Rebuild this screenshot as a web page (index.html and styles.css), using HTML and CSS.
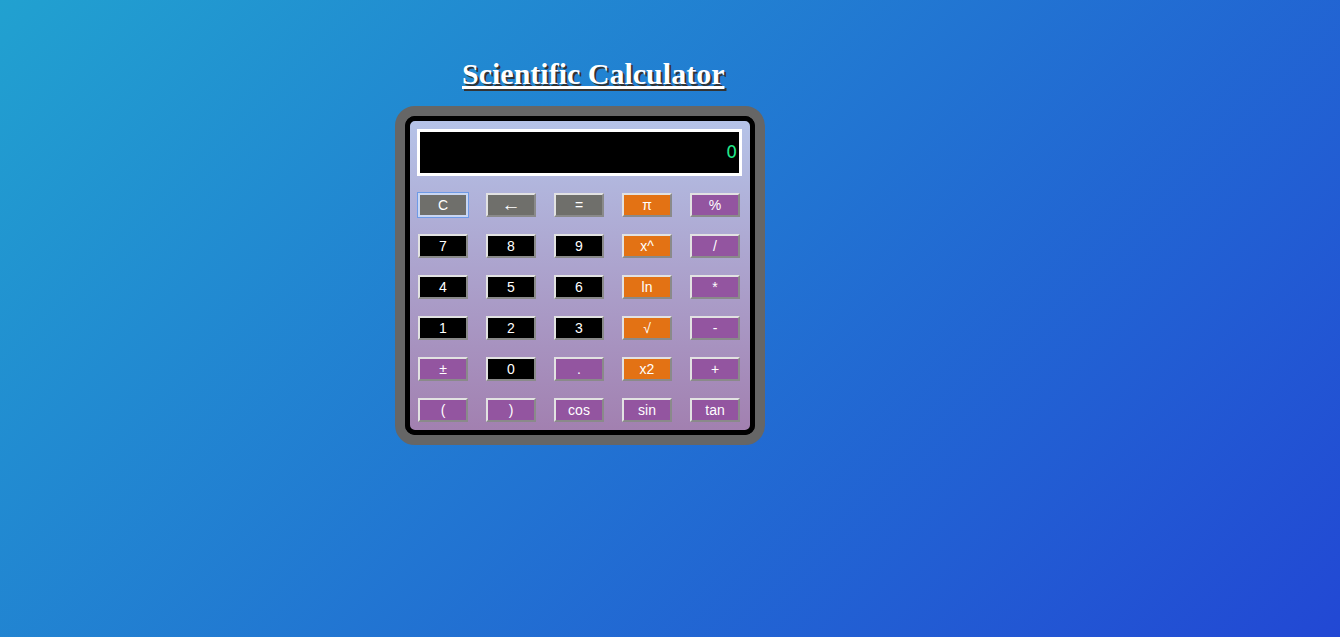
FILE: index.html
```html
<!DOCTYPE html>
<html>
<head>
<meta charset="utf-8">
<link rel="stylesheet" href="styles.css">
</head>
<body>
<div class="page">
  <h1 class="title">Scientific Calculator</h1>
  <div class="calc">
    <div class="panel">
      <div class="display">0</div>
      <div class="keys">
        <button class="key gray focused">C</button>
        <button class="key gray arrow">&larr;</button>
        <button class="key gray">=</button>
        <button class="key orange">π</button>
        <button class="key purple">%</button>

        <button class="key black">7</button>
        <button class="key black">8</button>
        <button class="key black">9</button>
        <button class="key orange">x^</button>
        <button class="key purple">/</button>

        <button class="key black">4</button>
        <button class="key black">5</button>
        <button class="key black">6</button>
        <button class="key orange">ln</button>
        <button class="key purple">*</button>

        <button class="key black">1</button>
        <button class="key black">2</button>
        <button class="key black">3</button>
        <button class="key orange">√</button>
        <button class="key purple">-</button>

        <button class="key purple">±</button>
        <button class="key black">0</button>
        <button class="key purple">.</button>
        <button class="key orange">x2</button>
        <button class="key purple">+</button>

        <button class="key purple">(</button>
        <button class="key purple">)</button>
        <button class="key purple">cos</button>
        <button class="key purple">sin</button>
        <button class="key purple">tan</button>
      </div>
    </div>
  </div>
</div>
</body>
</html>
```
FILE: styles.css
```css
html, body {
  margin: 0;
  padding: 0;
}
body {
  min-height: 637px;
  background: linear-gradient(135deg, #21a1d0 0%, #2248d4 100%);
  font-family: "Liberation Sans", Arial, sans-serif;
}
.page {
  display: flex;
  flex-direction: column;
  align-items: flex-start;
  padding-left: 395px;
  padding-top: 55px;
}
.title {
  margin: 0 0 13px 67px;
  font-family: "Liberation Serif", "Times New Roman", serif;
  font-weight: bold;
  font-size: 30px;
  line-height: 38px;
  color: #fff;
  text-decoration: underline;
  text-shadow: 2px 2px 0 #333;
}
.calc {
  border: 10px solid #666;
  border-radius: 20px;
  background: #000;
}
.panel {
  border: 5px solid #000;
  border-radius: 10px;
  background: linear-gradient(180deg, #b5c3e8 0%, #a280b0 100%);
  padding: 8px 8px 8px 7px;
  width: 325px;
}
.display {
  height: 41px;
  border: 3px solid #fff;
  background: #000;
  color: #22e88c;
  font-family: "DejaVu Sans", sans-serif;
  font-size: 17px;
  line-height: 41px;
  text-align: right;
  padding-right: 2px;
}
.keys {
  display: grid;
  grid-template-columns: repeat(5, 50px);
  column-gap: 18px;
  row-gap: 17px;
  margin-top: 17px;
  margin-left: 1px;
}
.key {
  width: 50px;
  height: 24px;
  padding: 0;
  margin: 0;
  border: 2px solid;
  border-color: #e2e2e2 #8a8a8a #8a8a8a #e2e2e2;
  color: #fff;
  font-family: "Liberation Sans", Arial, sans-serif;
  font-size: 14px;
  line-height: 20px;
  text-align: center;
}
.arrow {
  font-size: 19px;
  line-height: 18px;
}
.gray { background: #6f6f6b; }
.black { background: #000; }
.orange { background: #e37214; }
.purple { background: #9355a0; }
.focused {
  border-color: #c9d6f2;
  box-shadow: 0 0 0 1px #6e9ae6;
}
```
